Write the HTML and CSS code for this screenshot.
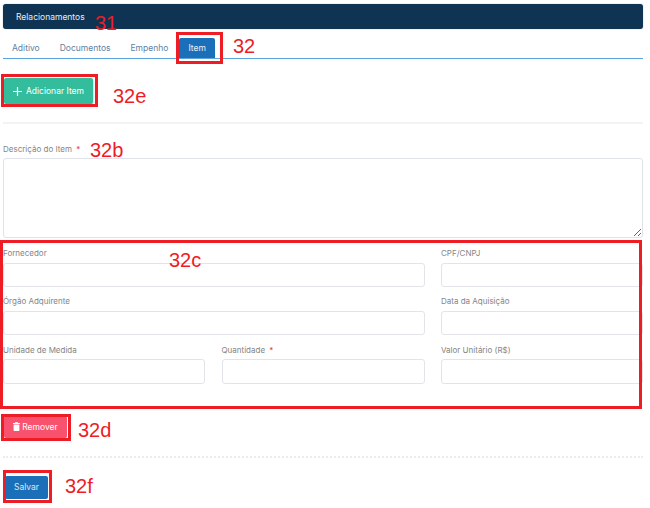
FILE: index.html
```html
<!DOCTYPE html>
<html lang="en">
<head>
    <meta charset="UTF-8">
    <meta name="viewport" content="width=device-width, initial-scale=1.0">
    <title>Relacionamentos - Item</title>
    <link rel="stylesheet" href="styles.css">
</head>
<body>

<div class="page">
    <div class="section-bar">Relacionamentos</div>

    <ul class="tabs">
        <li class="tab">Aditivo</li>
        <li class="tab">Documentos</li>
        <li class="tab">Empenho</li>
        <li class="tab active">Item</li>
    </ul>

    <button class="btn btn-add" type="button">
        <svg class="icon-plus" viewBox="0 0 9 9" width="9" height="9"><path d="M4.5 0v9M0 4.5h9" stroke="currentColor" stroke-width="1.2" fill="none"/></svg>
        Adicionar Item
    </button>

    <hr class="divider first">

    <label class="field-label desc-label">Descrição do Item <span class="req">*</span></label>
    <textarea class="desc-input"></textarea>

    <!-- Item fields -->
    <div class="item-grid">
        <div class="field wide"><label class="field-label">Fornecedor</label><input type="text"></div>
        <div class="field"><label class="field-label">CPF/CNPJ</label><input type="text"></div>
        <div class="field wide"><label class="field-label">Órgão Adquirente</label><input type="text"></div>
        <div class="field"><label class="field-label">Data da Aquisição</label><input type="text"></div>
        <div class="field"><label class="field-label">Unidade de Medida</label><input type="text"></div>
        <div class="field"><label class="field-label">Quantidade <span class="req">*</span></label><input type="text"></div>
        <div class="field"><label class="field-label">Valor Unitário (R$)</label><input type="text"></div>
    </div>

    <button class="btn btn-remove" type="button">
        <svg class="icon-trash" viewBox="0 0 7 9" width="7" height="9"><path d="M2 .2h3v.8h2v1H0V1h2zM.6 2.5h5.8v5.7a.7.7 0 0 1-.7.7H1.3a.7.7 0 0 1-.7-.7z" fill="currentColor"/></svg>
        Remover
    </button>

    <hr class="divider second">

    <button class="btn btn-save" type="button">Salvar</button>
</div>

<!-- Annotations drawn over the screenshot -->
<div class="mark mark-tab"></div>
<div class="mark mark-add"></div>
<div class="mark mark-grid"></div>
<div class="mark mark-remove"></div>
<div class="mark mark-save"></div>

<span class="note note-31">31</span>
<span class="note note-32">32</span>
<span class="note note-32e">32e</span>
<span class="note note-32b">32b</span>
<span class="note note-32c">32c</span>
<span class="note note-32d">32d</span>
<span class="note note-32f">32f</span>

</body>
</html>
```

FILE: styles.css
```css
html, body {
    margin: 0;
    height: 508px;
    overflow: hidden;
    background-color: white;
}

body {
    position: relative;
    font-family: Inter, "Open Sans", sans-serif;
    color: #6b7280;
}

.page {
    padding: 4px 7px 0 3px;
}

.section-bar {
    height: 25px;
    box-sizing: border-box;
    padding: 7px 13px 0;
    background-color: #0f3353;
    border-radius: 3px;
    box-shadow: 0 0 1px rgba(0, 0, 0, 0.5);
    color: #e8edf2;
    font-size: 8.5px;
    line-height: 12px;
}

.tabs {
    display: flex;
    list-style: none;
    margin: 2px 0 0;
    padding: 0 0 0 9px;
    height: 28px;
    box-sizing: border-box;
    align-items: flex-end;
    border-bottom: 1px solid #5aa5e0;
}

.tab {
    font-size: 8.5px;
    line-height: 20px;
    height: 20px;
    margin-right: 20px;
    color: #5f81a3;
}

.tab.active {
    margin-left: -9px;
    padding: 0 9px;
    background-color: #1b6fb8;
    border-radius: 2px 2px 0 0;
    color: #e8f0f8;
}

.btn {
    display: flex;
    align-items: center;
    border: none;
    border-radius: 2px;
    font-family: inherit;
    color: white;
    padding: 0;
}

.btn-add {
    justify-content: center;
    gap: 4px;
    width: 89px;
    height: 26px;
    margin: 19px 0 0 1px;
    background-color: #33bd9c;
    font-size: 8.5px;
    box-shadow: 1px 1px 2px rgba(0, 0, 0, 0.15);
}

.divider {
    border: none;
    margin: 0;
}

.divider.first {
    height: 2px;
    margin-top: 18px;
    background-color: #f3f3f3;
}

.divider.second {
    height: 0;
    margin-top: 18px;
    border-top: 2px dotted #ececec;
}

.field-label {
    display: block;
    font-size: 8px;
    line-height: 10px;
    color: #858585;
}

.desc-label {
    margin-top: 20px;
}

.req {
    color: #e0334d;
    margin-left: 2px;
}

.desc-input {
    display: block;
    width: 100%;
    height: 80px;
    box-sizing: border-box;
    margin: 4px 0 0;
    border: 1px solid #dfe2e8;
    border-radius: 3px;
    background-color: white;
}

.item-grid {
    display: grid;
    grid-template-columns: 202px 203px 1fr;
    column-gap: 16.5px;
    row-gap: 9.3px;
    margin-top: 10px;
}

.field.wide {
    grid-column: span 2;
}

.field input {
    display: block;
    width: 100%;
    height: 24.5px;
    box-sizing: border-box;
    margin: 4.5px 0 0;
    border: 1px solid #e2e4ea;
    border-radius: 3px;
    background-color: white;
}

.btn-remove {
    justify-content: center;
    gap: 2px;
    width: 63px;
    height: 22px;
    margin: 32px 0 0 1px;
    background-color: #f9526f;
    font-size: 8.5px;
}

.btn-save {
    justify-content: center;
    width: 43px;
    height: 23px;
    margin: 18px 0 0 2px;
    background-color: #1b6fb8;
    font-size: 8.5px;
    color: #dce8f3;
}

/* red boxes and numbers on top of the page */
.mark {
    position: absolute;
    box-sizing: border-box;
    border: 3px solid #ee1c25;
}

.mark-tab { left: 176px; top: 32px; width: 47px; height: 32px; }
.mark-add { left: 1px; top: 74px; width: 97px; height: 33px; }
.mark-grid { left: 0; top: 240px; width: 642px; height: 169px; }
.mark-remove { left: 1px; top: 414px; width: 70px; height: 27px; }
.mark-save { left: 3px; top: 470px; width: 49px; height: 33px; }

.note {
    position: absolute;
    font-family: "Liberation Sans", Arial, sans-serif;
    font-size: 20px;
    line-height: 24px;
    color: #ee1c25;
}

.note-31 { left: 95px; top: 11px; }
.note-32 { left: 233px; top: 34px; }
.note-32e { left: 113px; top: 84px; }
.note-32b { left: 90px; top: 138px; }
.note-32c { left: 169px; top: 248px; }
.note-32d { left: 78px; top: 418px; }
.note-32f { left: 65px; top: 474px; }
```
